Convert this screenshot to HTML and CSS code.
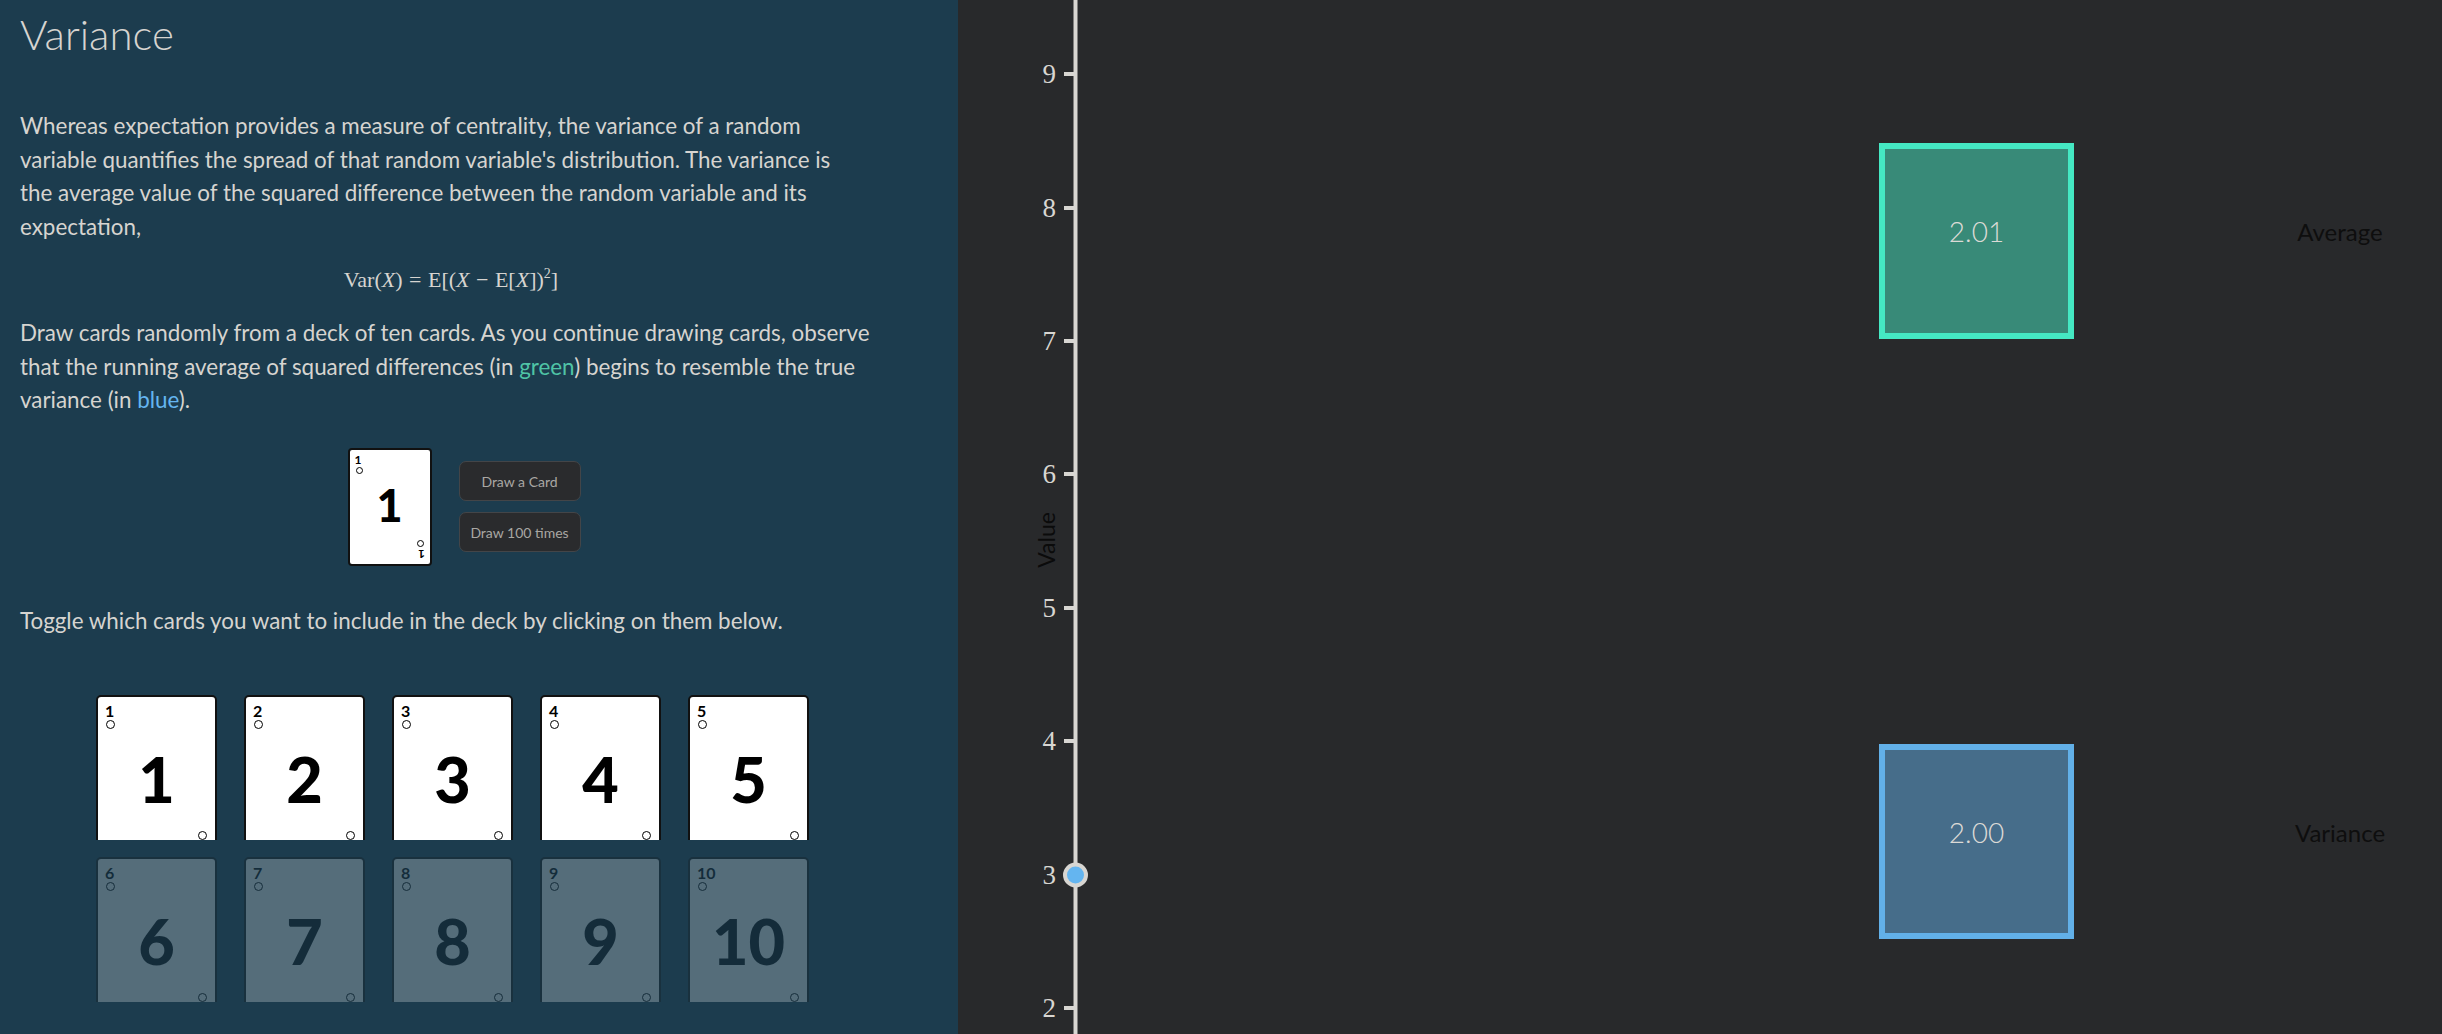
FILE: index.html
```html
<!DOCTYPE html>
<html>
<head>
<meta charset="utf-8">
<link rel="stylesheet" href="styles.css">
</head>
<body>
<div class="page">
  <section class="left">
    <h1 class="title">Variance</h1>
    <p class="para p1">Whereas expectation provides a measure of centrality, the variance of a random<br>variable quantifies the spread of that random variable's distribution. The variance is<br>the average value of the squared difference between the random variable and its<br>expectation,</p>
    <div class="formula"><span class="rm">Var</span>(<i>X</i>) = <span class="rm">E</span>[(<i>X</i> − <span class="rm">E</span>[<i>X</i>])<sup>2</sup>]</div>
    <p class="para p2">Draw cards randomly from a deck of ten cards. As you continue drawing cards, observe<br>that the running average of squared differences (in <span class="green">green</span>) begins to resemble the true<br>variance (in <span class="blue">blue</span>).</p>
    <div class="draw">
      <div class="card small">
        <div class="corner"><span class="cnum">1</span><span class="pip"></span></div>
        <div class="big">1</div>
        <div class="corner flip"><span class="cnum">1</span><span class="pip"></span></div>
      </div>
      <div class="buttons">
        <button class="btn">Draw a Card</button>
        <button class="btn">Draw 100 times</button>
      </div>
    </div>
    <p class="para toggle">Toggle which cards you want to include in the deck by clicking on them below.</p>
    <div class="deck">
      <div class="slot"><div class="card"><div class="corner"><span class="cnum">1</span><span class="pip"></span></div><div class="big">1</div><div class="corner flip"><span class="cnum">1</span><span class="pip"></span></div></div></div>
      <div class="slot"><div class="card"><div class="corner"><span class="cnum">2</span><span class="pip"></span></div><div class="big">2</div><div class="corner flip"><span class="cnum">2</span><span class="pip"></span></div></div></div>
      <div class="slot"><div class="card"><div class="corner"><span class="cnum">3</span><span class="pip"></span></div><div class="big">3</div><div class="corner flip"><span class="cnum">3</span><span class="pip"></span></div></div></div>
      <div class="slot"><div class="card"><div class="corner"><span class="cnum">4</span><span class="pip"></span></div><div class="big">4</div><div class="corner flip"><span class="cnum">4</span><span class="pip"></span></div></div></div>
      <div class="slot"><div class="card"><div class="corner"><span class="cnum">5</span><span class="pip"></span></div><div class="big">5</div><div class="corner flip"><span class="cnum">5</span><span class="pip"></span></div></div></div>
      <div class="slot off"><div class="card"><div class="corner"><span class="cnum">6</span><span class="pip"></span></div><div class="big">6</div><div class="corner flip"><span class="cnum">6</span><span class="pip"></span></div></div></div>
      <div class="slot off"><div class="card"><div class="corner"><span class="cnum">7</span><span class="pip"></span></div><div class="big">7</div><div class="corner flip"><span class="cnum">7</span><span class="pip"></span></div></div></div>
      <div class="slot off"><div class="card"><div class="corner"><span class="cnum">8</span><span class="pip"></span></div><div class="big">8</div><div class="corner flip"><span class="cnum">8</span><span class="pip"></span></div></div></div>
      <div class="slot off"><div class="card"><div class="corner"><span class="cnum">9</span><span class="pip"></span></div><div class="big">9</div><div class="corner flip"><span class="cnum">9</span><span class="pip"></span></div></div></div>
      <div class="slot off"><div class="card"><div class="corner"><span class="cnum">10</span><span class="pip"></span></div><div class="big">10</div><div class="corner flip"><span class="cnum">10</span><span class="pip"></span></div></div></div>
    </div>
  </section>
  <section class="right">
    <svg class="chart" width="1484" height="1034" viewBox="0 0 1484 1034">
      <g class="axis">
        <rect x="115.5" y="0" width="4" height="1034" class="axis-line"/>
        <rect x="106" y="72" width="10" height="4" class="axis-line"/>
        <rect x="106" y="206" width="10" height="4" class="axis-line"/>
        <rect x="106" y="339" width="10" height="4" class="axis-line"/>
        <rect x="106" y="472" width="10" height="4" class="axis-line"/>
        <rect x="106" y="606" width="10" height="4" class="axis-line"/>
        <rect x="106" y="739" width="10" height="4" class="axis-line"/>
        <rect x="106" y="1006" width="10" height="4" class="axis-line"/>
        <text x="98" y="83" class="tick">9</text>
        <text x="98" y="217" class="tick">8</text>
        <text x="98" y="350" class="tick">7</text>
        <text x="98" y="483" class="tick">6</text>
        <text x="98" y="617" class="tick">5</text>
        <text x="98" y="750" class="tick">4</text>
        <text x="98" y="884" class="tick">3</text>
        <text x="98" y="1017" class="tick">2</text>
        <text x="0" y="0" class="axis-title" transform="translate(97 540) rotate(-90)">Value</text>
        <circle cx="117.5" cy="875" r="10.5" class="dot"/>
      </g>
      <rect x="924" y="146" width="189" height="190" class="box-green"/>
      <text x="1018.5" y="242" class="box-val">2.01</text>
      <text x="1382" y="241" class="legend">Average</text>
      <rect x="924" y="747" width="189" height="189" class="box-blue"/>
      <text x="1018.5" y="843" class="box-val">2.00</text>
      <text x="1382" y="842" class="legend">Variance</text>
    </svg>
  </section>
</div>
</body>
</html>
```

FILE: styles.css
```css
* { box-sizing: border-box; }
html, body { margin: 0; padding: 0; }
body {
  width: 2442px;
  height: 1034px;
  overflow: hidden;
  font-family: Lato, "Noto Sans", sans-serif;
}
.page {
  display: flex;
  height: 1034px;
}
.left {
  width: 958px;
  flex: none;
  background: #1c3c4e;
  color: #d6d4d0;
  padding: 0 20px;
  overflow: hidden;
}
.right {
  flex: 1;
  background: #28292b;
  overflow: hidden;
}
.title {
  margin: 10px 0 0;
  font-size: 42px;
  line-height: 48px;
  font-weight: 300;
  color: #d6d4d0;
}
.para {
  margin: 0;
  font-size: 22.4px;
  line-height: 33.5px;
  white-space: nowrap;
}
.p1 { margin-top: 51px; }
.formula {
  margin-top: 22px;
  height: 30px;
  line-height: 30px;
  text-align: center;
  width: 862px;
  font-family: "Liberation Serif", "DejaVu Serif", serif;
  font-size: 22px;
  word-spacing: 1px;
  color: #d6d4d0;
}
.formula i { font-style: italic; }
.formula sup { font-size: 14px; vertical-align: 9px; line-height: 0; }
.p2 { margin-top: 21px; }
.green { color: #4fc4a6; }
.blue { color: #64b5f0; }
.draw {
  margin-top: 31px;
  width: 880px;
  display: flex;
  justify-content: center;
  align-items: center;
  gap: 27px;
  padding-left: 8px;
}
.buttons {
  display: flex;
  flex-direction: column;
  gap: 11px;
}
.btn {
  width: 122px;
  height: 40px;
  background: #2a2b2d;
  border: 1px solid #434548;
  border-radius: 7px;
  color: #a9a7a3;
  font-family: Lato, "Noto Sans", sans-serif;
  font-size: 14px;
}
.toggle { margin-top: 38px; }
.deck {
  margin-top: 58px;
  margin-left: 76px;
  display: grid;
  grid-template-columns: repeat(5, 121px);
  column-gap: 27px;
  row-gap: 17px;
}
.slot {
  width: 121px;
  height: 145px;
  overflow: hidden;
}
.slot.off { opacity: 0.25; }
.card {
  width: 121px;
  height: 170px;
  background: #fff;
  border: 2px solid #111;
  border-radius: 5px;
  color: #000;
  display: flex;
  flex-direction: column;
  padding: 6px 7px;
}
.card.small {
  width: 84px;
  height: 118px;
  padding: 4px 5px;
  border-radius: 4px;
}
.corner {
  display: flex;
  flex-direction: column;
  align-items: flex-start;
  gap: 2px;
  line-height: 1;
}
.corner.flip {
  transform: rotate(180deg);
}
.cnum {
  font-weight: 700;
  font-size: 16px;
  line-height: 15px;
}
.pip {
  width: 9px;
  height: 9px;
  border: 1.5px solid #000;
  border-radius: 50%;
  margin-left: 1px;
}
.big {
  flex: 1;
  display: flex;
  align-items: center;
  justify-content: center;
  font-weight: 900;
  font-size: 63px;
  line-height: 1;
  padding-bottom: 4px;
}
.card.small .cnum { font-size: 12px; line-height: 11px; }
.card.small .pip { width: 7px; height: 7px; border-width: 1.2px; }
.card.small .big { font-size: 45px; padding-bottom: 2px; }
.chart { display: block; }
.axis-line { fill: #d8d6d2; }
.tick {
  font-family: "Liberation Serif", "DejaVu Serif", serif;
  font-size: 27px;
  fill: #d8d6d2;
  text-anchor: end;
}
.axis-title {
  font-family: Lato, "Noto Sans", sans-serif;
  font-size: 23px;
  fill: #0b0b0b;
  text-anchor: middle;
}
.dot { fill: #64b5f0; stroke: #d8d6d2; stroke-width: 4; }
.box-green { fill: #388a78; stroke: #45e8c3; stroke-width: 6; }
.box-blue { fill: #466d8a; stroke: #62b0e8; stroke-width: 6; }
.box-val {
  font-family: Lato, "Noto Sans", sans-serif;
  font-size: 28px;
  font-weight: 300;
  fill: #dcdad6;
  text-anchor: middle;
}
.legend {
  font-family: Lato, "Noto Sans", sans-serif;
  font-size: 24px;
  fill: #0e0e0e;
  text-anchor: middle;
}
```
